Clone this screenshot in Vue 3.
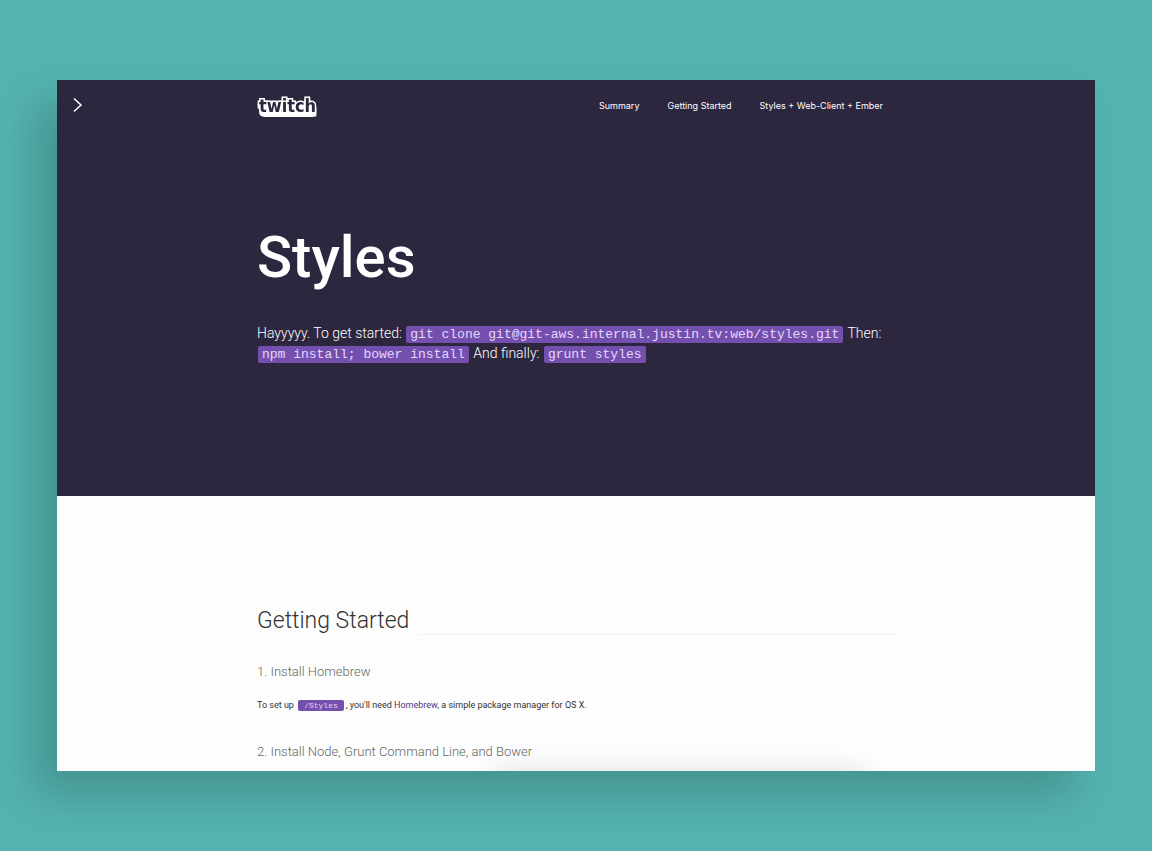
<script setup>
const links = ['Summary', 'Getting Started', 'Styles + Web-Client + Ember']
</script>

<template>
  <div class="stage">
    <div class="window">
      <header class="hero">
        <div class="topbar">
          <button class="toggle" type="button" aria-label="Open menu">
            <svg width="12" height="16" viewBox="0 0 12 16" fill="none" stroke="#fff" stroke-width="1.5">
              <path d="M2 1.5 9 8l-7 6.5" />
            </svg>
          </button>
          <div class="column bar">
            <a class="logo" href="#">
              <svg width="62" height="24" viewBox="0 0 62 24">
                <path class="base" d="M4 18h55v2l-3 3H7l-3-3z" />
                <text x="2" y="18">twitch</text>
              </svg>
            </a>
            <nav class="nav">
              <a v-for="l in links" :key="l" href="#">{{ l }}</a>
            </nav>
          </div>
        </div>
        <div class="column intro">
          <h1>Styles</h1>
          <p>
            Hayyyyy. To get started: <code>git clone git@git-aws.internal.justin.tv:web/styles.git</code> Then:
            <code>npm install; bower install</code> And finally: <code>grunt styles</code>
          </p>
        </div>
      </header>
      <main class="column content">
        <h2>Getting Started</h2>
        <h3>1. Install Homebrew</h3>
        <p>To set up <code>/Styles</code>, you'll need <a href="#">Homebrew</a>, a simple package manager for OS X.</p>
        <h3>2. Install Node, Grunt Command Line, and Bower</h3>
      </main>
      <div class="shade"></div>
    </div>
  </div>
</template>

<style>
body {
  margin: 0;
  background: #54b3b0;
}
</style>

<style scoped>
* {
  box-sizing: border-box;
}
.stage {
  display: flex;
  min-height: 100vh;
  padding: 80px 57px;
  font-family: Roboto, "Liberation Sans", sans-serif;
}
.window {
  position: relative;
  flex: 1;
  min-width: 0;
  overflow: hidden;
  background: #fdfdfd;
  box-shadow: -22px 24px 40px rgba(0, 0, 0, 0.18);
}
.column {
  width: 100%;
  max-width: 638px;
  margin: 0 auto;
}
.hero {
  min-height: 416px;
  background: #2c263f;
  color: #fff;
}
.topbar {
  position: relative;
  padding-top: 14px;
}
.toggle {
  position: absolute;
  left: 15px;
  top: 17px;
  display: block;
  padding: 0;
  border: 0;
  background: none;
}
.toggle svg {
  display: block;
}
.bar {
  display: flex;
  justify-content: space-between;
  align-items: center;
  padding-right: 12px;
}
.logo svg {
  display: block;
}
.logo text {
  font: bold 18px "DejaVu Sans Condensed", "DejaVu Sans", sans-serif;
  fill: #2c263f;
  stroke: #fff;
  stroke-width: 3px;
  stroke-linejoin: miter;
  paint-order: stroke;
  filter: drop-shadow(0 3px 0 #fff);
}
.base {
  fill: #fff;
}
.nav {
  display: flex;
  gap: 28px;
}
.nav a {
  color: #fff;
  font-family: Inter, Roboto, sans-serif;
  font-size: 9px;
  line-height: 20px;
  text-decoration: none;
}
.intro {
  padding-top: 104px;
}
h1 {
  margin: 0;
  font-size: 58px;
  font-weight: 500;
  line-height: 70px;
}
.intro p {
  margin: 31px 0 0;
  font-size: 14px;
  font-weight: 300;
  line-height: 20px;
}
code {
  margin: 0 1px;
  padding: 1px 4px;
  border-radius: 2px;
  background: #7350ae;
  color: #e8d5ff;
  font-family: "Liberation Mono", monospace;
  font-size: 13px;
  font-weight: 400;
  line-height: 12px;
}
.content {
  padding-top: 110px;
}
h2 {
  display: flex;
  align-items: flex-end;
  gap: 10px;
  margin: 0;
  color: #333;
  font-size: 23px;
  font-weight: 300;
  line-height: 30px;
}
h2::after {
  content: "";
  flex: 1;
  height: 1px;
  margin-bottom: 1px;
  background: #f1f1f1;
}
h3 {
  margin: 26px 0 0;
  color: #666;
  font-size: 13px;
  font-weight: 300;
  line-height: 20px;
}
.content p {
  margin: 12px 0 0;
  color: #333;
  font-size: 9px;
  line-height: 22px;
}
.content p code {
  margin: 0 2px;
  padding: 1px 6px;
  font-size: 8px;
}
.content p a {
  color: #4b367c;
  text-decoration: none;
}
.shade {
  position: absolute;
  right: 22%;
  bottom: -20px;
  width: 36%;
  height: 20px;
  box-shadow: 0 0 24px rgba(0, 0, 0, 0.12);
}
</style>
